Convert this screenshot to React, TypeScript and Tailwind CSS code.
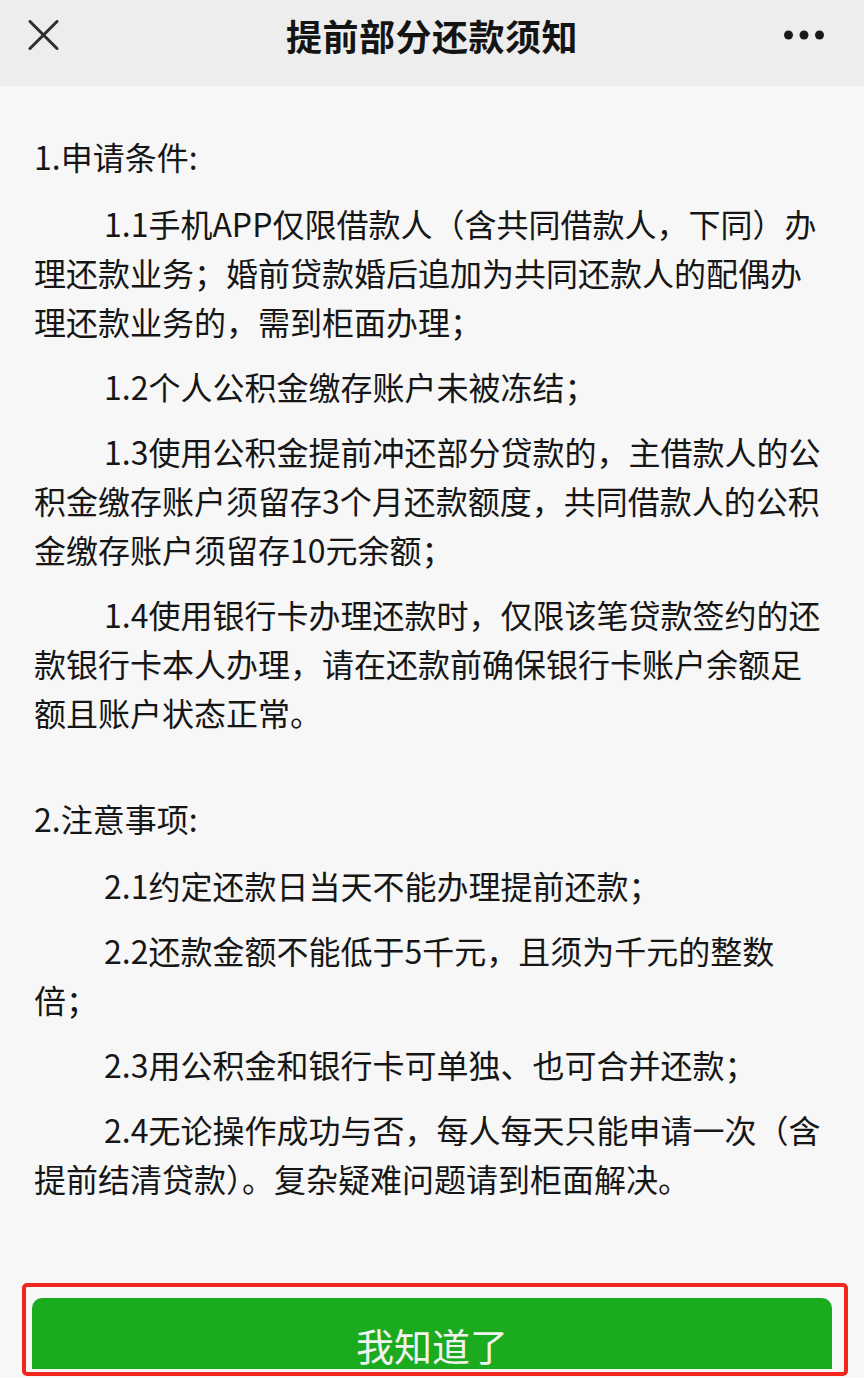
import React from 'react';

const font = { fontFamily: '"Noto Sans CJK SC", "Noto Sans", sans-serif' };

const sections: { title: string; items: string[] }[] = [
  {
    title: '1.申请条件:',
    items: [
      '1.1手机APP仅限借款人（含共同借款人，下同）办理还款业务；婚前贷款婚后追加为共同还款人的配偶办理还款业务的，需到柜面办理；',
      '1.2个人公积金缴存账户未被冻结；',
      '1.3使用公积金提前冲还部分贷款的，主借款人的公积金缴存账户须留存3个月还款额度，共同借款人的公积金缴存账户须留存10元余额；',
      '1.4使用银行卡办理还款时，仅限该笔贷款签约的还款银行卡本人办理，请在还款前确保银行卡账户余额足额且账户状态正常。',
    ],
  },
  {
    title: '2.注意事项:',
    items: [
      '2.1约定还款日当天不能办理提前还款；',
      '2.2还款金额不能低于5千元，且须为千元的整数倍；',
      '2.3用公积金和银行卡可单独、也可合并还款；',
      '2.4无论操作成功与否，每人每天只能申请一次（含提前结清贷款）。复杂疑难问题请到柜面解决。',
    ],
  },
];

const Header: React.FC = () => (
  <header className="h-[86px] shrink-0 bg-[#ededed] grid grid-cols-[1fr_auto_1fr] items-center pb-[16px]">
    <div className="pl-[28px]">
      <svg width="31" height="30" viewBox="0 0 31 30" fill="none">
        <path d="M2 1.5 L29 28.5 M29 1.5 L2 28.5" stroke="#2e2e2e" strokeWidth="3" strokeLinecap="round" />
      </svg>
    </div>
    <h1 className="text-[36px] leading-[40px] font-bold text-[#141414] tracking-[0.5px]">提前部分还款须知</h1>
    <div className="flex justify-end pr-[40px]">
      <svg width="40" height="10" viewBox="0 0 40 10">
        <circle cx="4.5" cy="5" r="4.5" fill="#1a1a1a" />
        <circle cx="20" cy="5" r="4.5" fill="#1a1a1a" />
        <circle cx="35.5" cy="5" r="4.5" fill="#1a1a1a" />
      </svg>
    </div>
  </header>
);

export default function App() {
  return (
    <div className="h-[1378px] w-[864px] overflow-hidden bg-[#f7f7f7] flex flex-col" style={font}>
      <Header />
      <main className="pt-[46px] px-[34px] text-[32px] leading-[49px] text-[#161616]">
        {sections.map((s, i) => (
          <section key={s.title} className={i > 0 ? 'mt-[57px]' : ''}>
            <p className="mb-[18px]">{s.title}</p>
            {s.items.map((t, j) => (
              <p key={j} className={'indent-[70px] ' + (j < s.items.length - 1 ? 'mb-[16px]' : '')}>
                {t}
              </p>
            ))}
          </section>
        ))}
      </main>
      <div className="mt-auto ml-[22px] mr-[16px] mb-[2px] border-[4px] border-[#f2261c] rounded-[5px] pt-[11px] pl-[6px] pr-[12px] pb-[3px] bg-[#f7f7f7]">
        <button className="w-full h-[71px] bg-[#1aab1f] rounded-t-[10px] text-[38px] leading-[48px] text-[#f2f2f2] pt-[23px] flex justify-center items-start">
          我知道了
        </button>
      </div>
    </div>
  );
}
